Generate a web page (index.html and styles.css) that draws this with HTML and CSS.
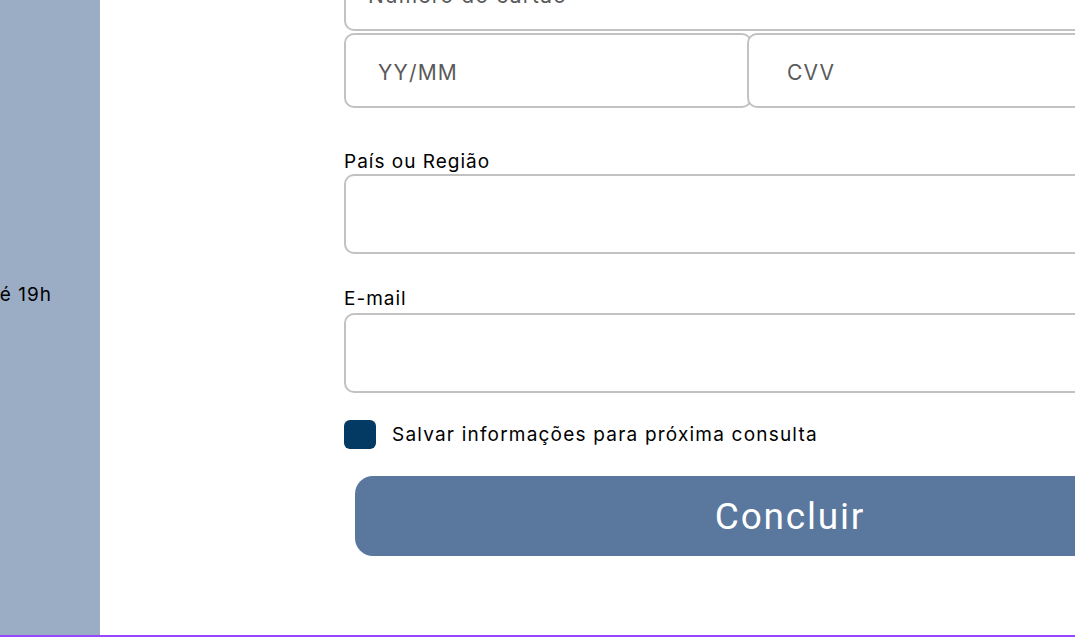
FILE: index.html
```html
<!DOCTYPE html>
<html lang="pt-BR">
<head>
<meta charset="utf-8">
<link rel="stylesheet" href="styles.css">
</head>
<body>
<div class="page">
  <aside class="sidebar">
    <p class="hours">Segunda a sexta, das 8h até 19h</p>
  </aside>
  <main class="content">
    <form class="form">
      <input class="field field-card" type="text" placeholder="Número do cartão">
      <div class="row">
        <input class="field field-half" type="text" placeholder="YY/MM">
        <input class="field field-half field-cvv" type="text" placeholder="CVV">
      </div>
      <label class="label label-country">País ou Região</label>
      <input class="field field-tall" type="text">
      <label class="label label-email">E-mail</label>
      <input class="field field-tall" type="email">
      <div class="check-row">
        <span class="checkbox"></span>
        <span class="check-text">Salvar informações para próxima consulta</span>
      </div>
      <button class="submit" type="button">Concluir</button>
    </form>
  </main>
</div>
</body>
</html>
```
FILE: styles.css
```css
* { box-sizing: border-box; }
html, body { margin: 0; padding: 0; background: #fff; overflow: hidden; }
body { font-family: "Inter", "Noto Sans", sans-serif; color: #000; }

.page {
  display: flex;
  width: 1075px;
  height: 637px;
  border-bottom: 2px solid #9747ff;
  overflow: hidden;
}

.sidebar {
  flex: 0 0 100px;
  background: #9badc5;
  overflow: hidden;
  display: flex;
  align-items: flex-start;
}
.hours {
  margin: 283px 0 0 -288px;
  white-space: nowrap;
  font-size: 19px;
  line-height: 24px;
  letter-spacing: 1px;
  width: 340px;
  text-align: right;
}

.content {
  flex: 1 1 auto;
  padding-left: 244px;
  overflow: hidden;
}

.form {
  width: 900px;
  margin-top: -44px;
  display: flex;
  flex-direction: column;
}

.field {
  display: block;
  width: 100%;
  border: 2px solid #c2c2c2;
  border-radius: 10px;
  background: #fff;
  font-family: inherit;
  font-size: 21px;
  letter-spacing: 1.2px;
  color: #000;
  outline: none;
  padding-top: 4px;
}
.field::placeholder { color: #5a5a5a; }

.field-card { height: 75px; padding-left: 22px; }

.row { display: flex; margin-top: 2px; }
.field-half { height: 75px; width: 408px; flex: 0 0 auto; padding-left: 32px; }
.field-cvv { position: relative; z-index: 1; width: 500px; margin-left: -5px; padding-left: 38px; }

.label {
  font-size: 19px;
  line-height: 24px;
  letter-spacing: 1px;
  margin-top: 42px;
  margin-bottom: 0;
}
.label-email { margin-top: 33px; margin-bottom: 2px; }

.field-tall { height: 80px; }

.check-row {
  display: flex;
  align-items: center;
  gap: 16px;
  margin-top: 27px;
}
.checkbox {
  width: 32px;
  height: 29px;
  border-radius: 6px;
  background: #033a63;
}
.check-text { font-size: 19px; line-height: 24px; letter-spacing: 1.2px; }

.submit {
  margin: 27px 0 0 11px;
  width: 870px;
  height: 80px;
  border: none;
  border-radius: 18px;
  background: #5a779e;
  color: #fff;
  font-family: "Roboto", sans-serif;
  font-size: 37px;
  letter-spacing: 1.8px;
  text-align: center;
}
```
